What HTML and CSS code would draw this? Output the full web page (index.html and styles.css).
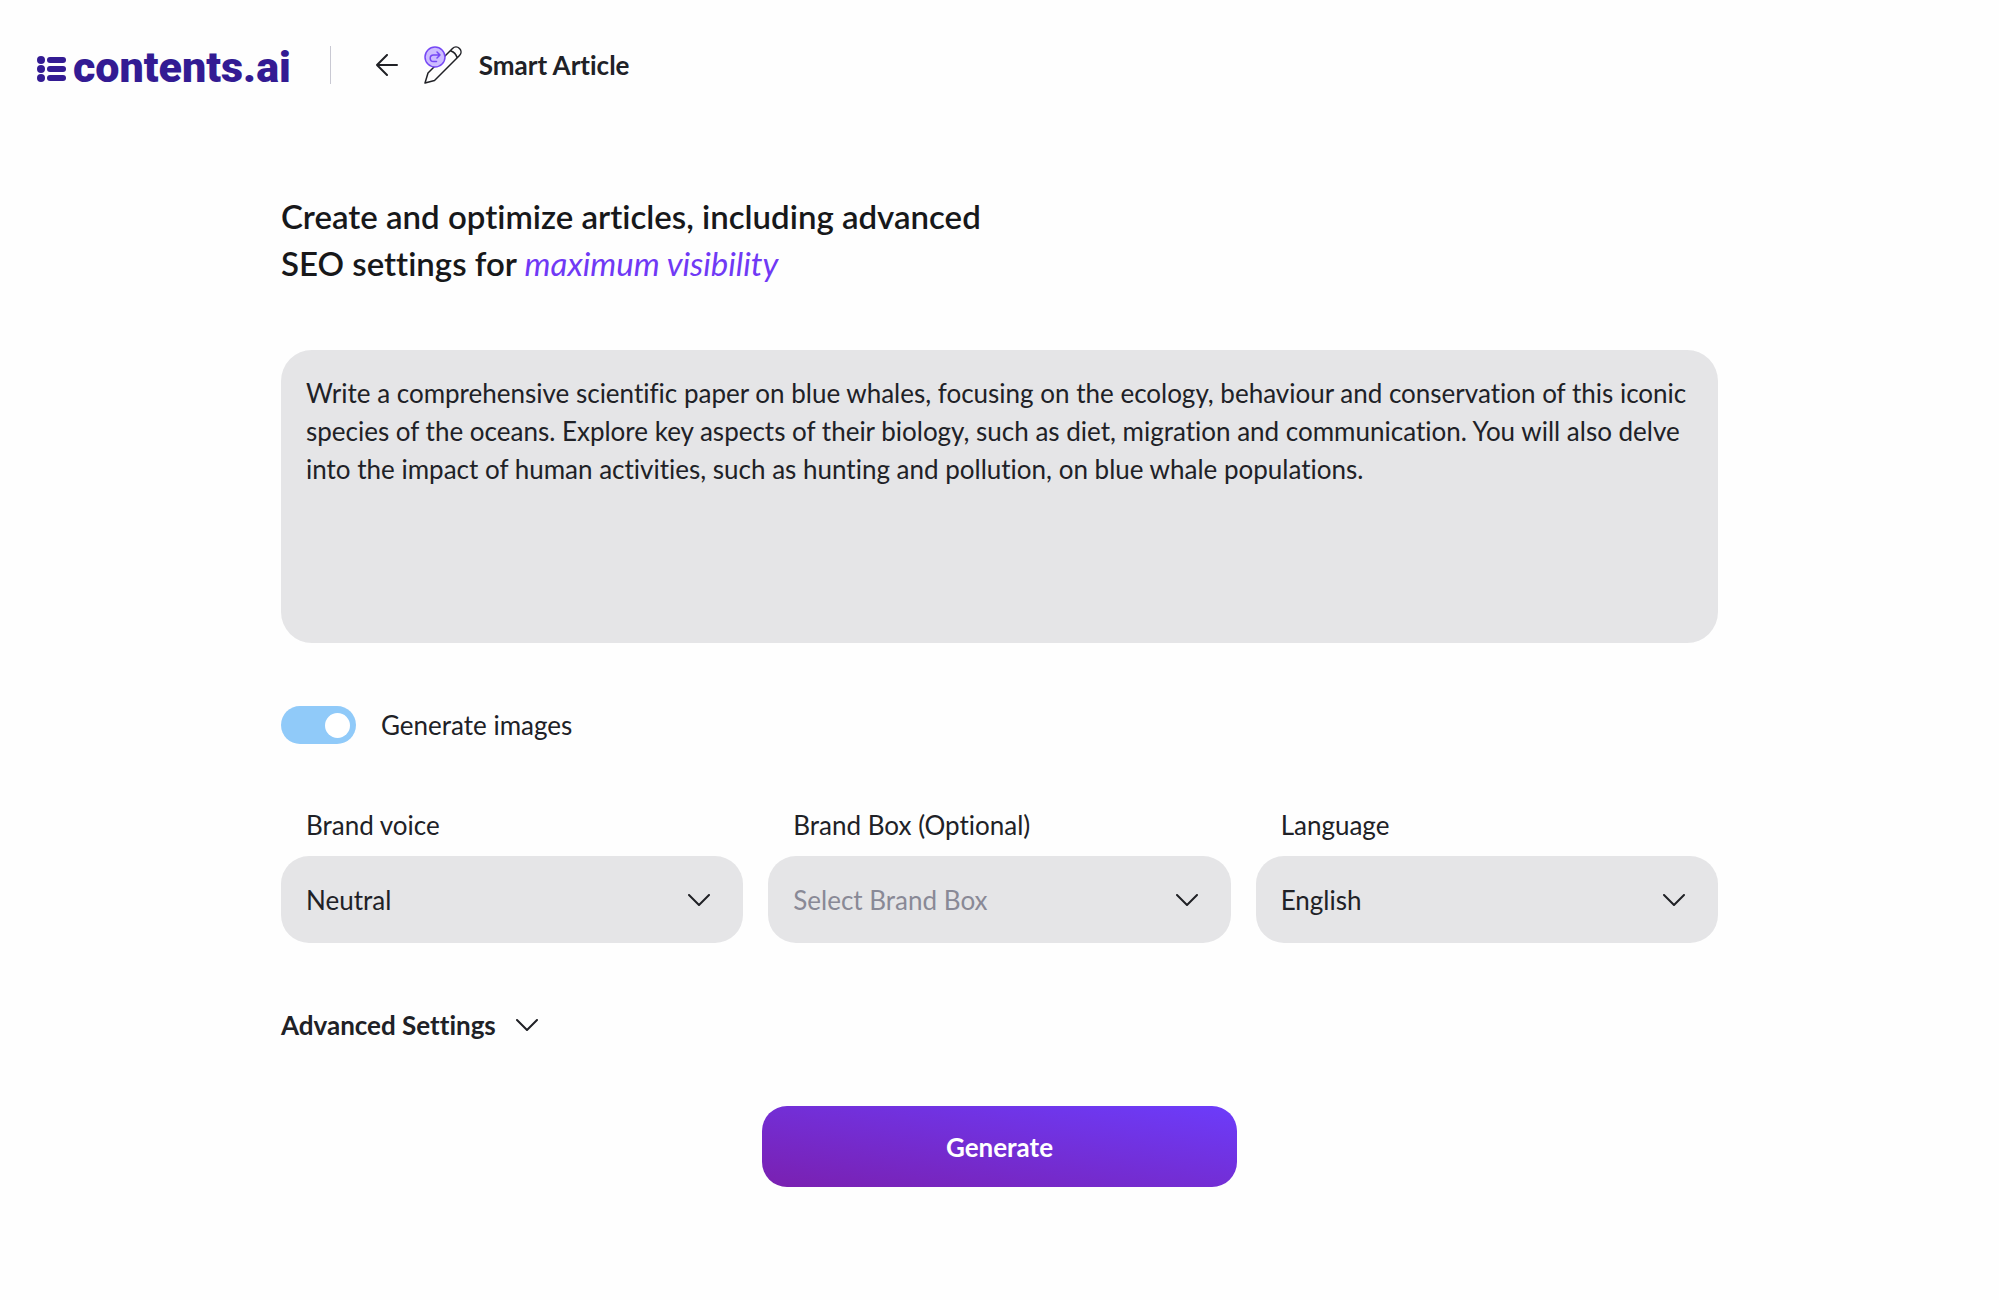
FILE: index.html
```html
<!doctype html>
<html lang="en">
	<head>
		<meta charset="utf-8">
		<meta name="viewport" content="width=device-width, initial-scale=1">
		<title>Smart Article | contents.ai</title>
		<link rel="stylesheet" href="styles.css">
	</head>
	<body>
		<header class="header">
			<a class="logo" href="#">
				<svg class="logo-mark" width="30" height="26" viewBox="0 0 30 26" fill="currentColor" aria-hidden="true">
					<circle cx="4" cy="4" r="4" />
					<circle cx="4" cy="13" r="4" />
					<circle cx="4" cy="22" r="4" />
					<rect x="10" y="1" width="19" height="6" rx="3" />
					<rect x="10" y="10" width="19" height="6" rx="3" />
					<rect x="10" y="19" width="19" height="6" rx="3" />
				</svg>
				<span>contents.ai</span>
			</a>
			<nav class="tool">
				<a class="back" href="#" aria-label="Back">
					<svg width="22" height="22" viewBox="0 0 22 22" fill="none" stroke="currentColor" stroke-width="2" stroke-linecap="round" stroke-linejoin="round">
						<path d="M21 11H1M11 1L1 11l10 10" />
					</svg>
				</a>
				<svg class="tool-icon" width="38" height="38" viewBox="0 0 38 38" fill="none" stroke-linecap="round" stroke-linejoin="round" aria-hidden="true">
					<path d="M1 37L4 27L28.500 2.500C30.500 .500 33.500 .500 35.500 2.500C37.500 4.500 37.500 7.500 35.500 9.500L10.500 34.500ZM27 5C30 6 32 8 33 11.500" stroke="#202126" stroke-width="1.500" />
					<circle cx="11" cy="11" r="10" fill="#cdbcff" stroke="#7648f5" stroke-width="1.500" />
					<path d="M16 9H9.500a3.300 3.300 0 0 0 0 6.600H12.500M13 6L16 9L13 12" stroke="#7648f5" stroke-width="1.500" />
				</svg>
				<span class="tool-name">Smart Article</span>
			</nav>
		</header>

		<main class="content">
			<h1 class="title">Create and optimize articles, including advanced<br>SEO settings for <em>maximum visibility</em></h1>

			<form class="form">
				<textarea class="prompt" aria-label="Article prompt">Write a comprehensive scientific paper on blue whales, focusing on the ecology, behaviour and conservation of this iconic species of the oceans. Explore key aspects of their biology, such as diet, migration and communication. You will also delve into the impact of human activities, such as hunting and pollution, on blue whale populations.</textarea>

				<label class="toggle">
					<input type="checkbox" checked>
					Generate images
				</label>

				<div class="fields">
					<div class="field">
						<label for="brand_voice">Brand voice</label>
						<div class="select">
							<select id="brand_voice">
								<option selected>Neutral</option>
							</select>
							<svg class="chevron" viewBox="0 0 22 12"><path d="M1 1l10 10L21 1" /></svg>
						</div>
					</div>
					<div class="field">
						<label for="brand_box">Brand Box (Optional)</label>
						<div class="select">
							<select id="brand_box" class="placeholder">
								<option selected>Select Brand Box</option>
							</select>
							<svg class="chevron" viewBox="0 0 22 12"><path d="M1 1l10 10L21 1" /></svg>
						</div>
					</div>
					<div class="field">
						<label for="language">Language</label>
						<div class="select">
							<select id="language">
								<option selected>English</option>
							</select>
							<svg class="chevron" viewBox="0 0 22 12"><path d="M1 1l10 10L21 1" /></svg>
						</div>
					</div>
				</div>

				<button class="advanced" type="button">
					Advanced Settings
					<svg class="chevron" viewBox="0 0 22 12"><path d="M1 1l10 10L21 1" /></svg>
				</button>

				<button class="generate" type="button">Generate</button>
			</form>
		</main>
	</body>
</html>
```
FILE: styles.css
```css
* {
	box-sizing: border-box;
}

body {
	margin: 0;
	background: #fefefe;
	color: #202126;
	font-family: Lato, sans-serif;
	font-size: 26px;
	font-variant-ligatures: none;
	line-height: 38px;
}

a {
	color: inherit;
	text-decoration: none;
}

svg {
	display: block;
	flex: none;
}

textarea, select, button {
	border: 0;
	color: inherit;
	font: inherit;
	font-variant-ligatures: none;
}

select, button {
	cursor: pointer;
}

/* header */
.header {
	display: flex;
	align-items: flex-start;
	padding: 46px 37px 0;
}

.logo {
	display: flex;
	align-items: baseline;
	gap: 6px;
	margin-top: 2px;
	color: #331b93;
	font-family: Roboto, sans-serif;
	font-size: 43px;
	font-weight: 900;
}

.tool {
	display: flex;
	align-items: center;
	height: 38px;
	margin-left: 39px;
	padding-left: 45px;
	border-left: 1px solid #c9c9d3;
}

.tool-icon {
	margin-left: 26px;
}

.tool-name {
	margin-left: 17px;
	font-weight: 700;
}

/* content */
.content {
	max-width: 1485px;
	margin: 0 auto;
	padding: 107px 24px 48px;
}

.title {
	margin: 0;
	font-size: 33px;
	font-weight: 600;
	line-height: 47px;
	color: #17181a;
}

.title em {
	color: #7039f5;
	font-weight: 400;
}

.form {
	display: flex;
	flex-direction: column;
	align-items: flex-start;
	margin-top: 63px;
}

.prompt {
	display: block;
	width: 100%;
	height: 293px;
	padding: 24px 25px;
	border-radius: 31px;
	background: #e5e5e7;
	resize: none;
}

/* switch */
.toggle {
	display: flex;
	align-items: center;
	gap: 25px;
	margin-top: 63px;
	cursor: pointer;
}

.toggle input {
	display: flex;
	justify-content: flex-end;
	align-items: center;
	width: 75px;
	height: 38px;
	margin: 0;
	padding: 6px;
	border-radius: 19px;
	background: #90caf9;
	appearance: none;
}

.toggle input::before {
	content: "";
	width: 25px;
	height: 25px;
	border-radius: 50%;
	background: #fff;
}

.toggle input:not(:checked) {
	justify-content: flex-start;
	background: #c9c9d3;
}

/* drop-downs */
.fields {
	display: grid;
	grid-template-columns: repeat(3, 1fr);
	gap: 25px;
	width: 100%;
	margin-top: 62px;
}

.field label {
	display: block;
	margin-bottom: 12px;
	padding-left: 25px;
}

.select {
	display: grid;
	align-items: center;
}

.select > * {
	grid-area: 1 / 1;
}

.select select {
	width: 100%;
	height: 87px;
	padding: 0 64px 0 25px;
	border-radius: 28px;
	background: #e5e5e7;
	appearance: none;
}

.select .placeholder {
	color: #898996;
}

.select .chevron {
	justify-self: end;
	margin-right: 33px;
	pointer-events: none;
}

.chevron {
	width: 22px;
	height: 12px;
	fill: none;
	stroke: #202126;
	stroke-width: 2;
	stroke-linecap: round;
	stroke-linejoin: round;
}

/* buttons */
.advanced {
	display: flex;
	align-items: center;
	gap: 20px;
	margin-top: 63px;
	padding: 0;
	background: none;
	font-weight: 700;
}

.generate {
	align-self: center;
	width: 475px;
	max-width: 100%;
	height: 81px;
	margin-top: 62px;
	border-radius: 25px;
	background: linear-gradient(to top right, #7a20b0, #6c3cfb);
	color: #fff;
	font-weight: 700;
}
```
